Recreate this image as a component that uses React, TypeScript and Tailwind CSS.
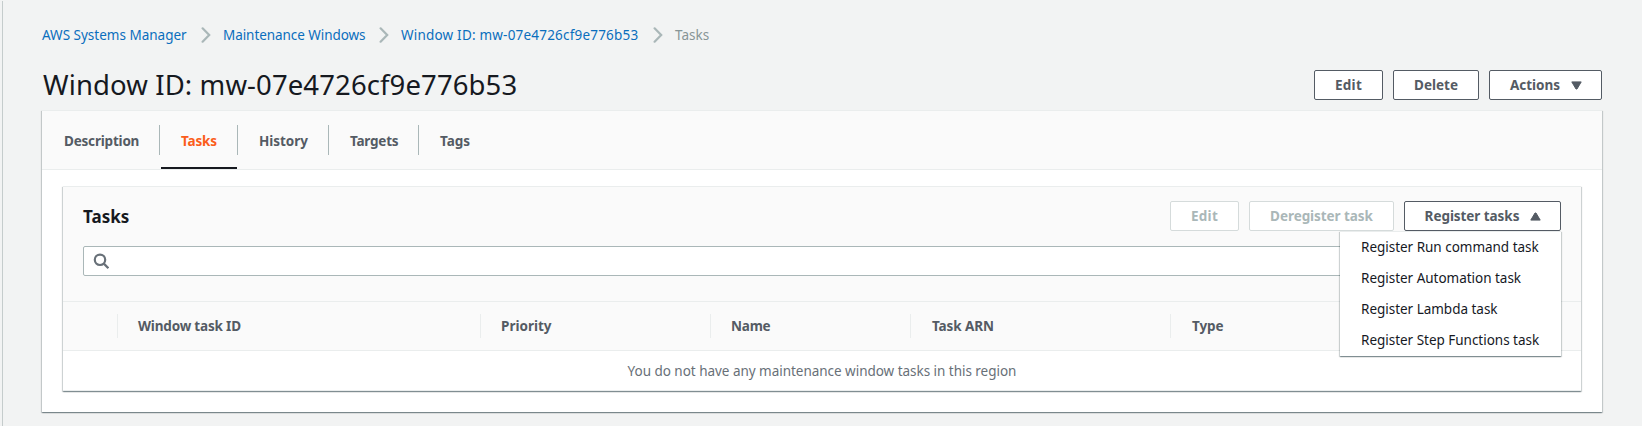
import React, { useState } from 'react';
import clsx from 'clsx';

const crumbs = [
  { label: 'AWS Systems Manager', cls: 'w-[144px]' },
  { label: 'Maintenance Windows', cls: 'w-[143px] tracking-[-0.06px]' },
  { label: 'Window ID: mw-07e4726cf9e776b53', cls: 'w-[237px] tracking-[0.2px]' },
];

const tabs = [
  { label: 'Description', cls: 'w-[118px] pl-[22px] tracking-[-0.2px]' },
  { label: 'Tasks', cls: 'w-[78px] pl-[21px] tracking-[-0.16px]' },
  { label: 'History', cls: 'w-[91px] pl-[21px] tracking-[-0.05px]' },
  { label: 'Targets', cls: 'w-[90px] pl-[21px] tracking-[-0.22px]' },
  { label: 'Tags', cls: 'w-[80px] pl-[21px]' },
];

const columns = [
  { label: '', cls: 'w-[55px]' },
  { label: 'Window task ID', cls: 'w-[363px] tracking-[-0.18px]' },
  { label: 'Priority', cls: 'w-[230px]' },
  { label: 'Name', cls: 'w-[200px] tracking-[-0.2px]' },
  { label: 'Task ARN', cls: 'w-[260px] !pl-[21px] tracking-[-0.1px]' },
  { label: 'Type', cls: 'flex-1 !pl-[21px] tracking-[-0.1px]' },
];

const menuItems = [
  'Register Run command task',
  'Register Automation task',
  'Register Lambda task',
  'Register Step Functions task',
];

const cardShadow =
  'border-t border-[#eaeded] shadow-[0_1px_1px_0_rgba(0,28,36,0.3),1px_1px_1px_0_rgba(0,28,36,0.15),-1px_1px_1px_0_rgba(0,28,36,0.15)]';

function Chevron() {
  return (
    <svg className="h-4 w-[10px] shrink-0" viewBox="0 0 10 16" fill="none" stroke="#aab7b8" strokeWidth="2.2" strokeLinecap="round">
      <path d="M1.6 1.3 8.2 8l-6.6 6.7" />
    </svg>
  );
}

function Triangle({ up = false }: { up?: boolean }) {
  return (
    <svg className={clsx('h-[9px] w-[11px] shrink-0', up && 'rotate-180')} viewBox="0 0 11 9" fill="#545b64" stroke="#545b64" strokeWidth="1" strokeLinejoin="round">
      <path d="M.8.9h9.4L6 8H5z" />
    </svg>
  );
}

function Button({ children, className, disabled }: { children: React.ReactNode; className?: string; disabled?: boolean }) {
  return (
    <button
      disabled={disabled}
      className={clsx(
        'flex h-[30px] items-center justify-center whitespace-nowrap rounded-[2px] border bg-white font-bold',
        disabled ? 'border-[#d5dbdb] text-[#aab7b8]' : 'border-[#545b64] text-[#545b64]',
        className,
      )}
    >
      {children}
    </button>
  );
}

export default function App() {
  const [active, setActive] = useState('Tasks');
  return (
    <div className="flex h-[426px] w-[1642px] overflow-hidden bg-[#f2f3f3] font-['Noto_Sans',sans-serif] text-[13.5px] leading-[20px] text-[#16191f]">
      <div className="mt-px w-[3px] border-r border-[#c5cccc]" />
      <main className="ml-[39px] w-[1560px]">
        <nav className="mt-[25px] flex h-5 items-center whitespace-nowrap text-[#0a6ebd]">
          {crumbs.map((c, i) => (
            <React.Fragment key={c.label}>
              <a className={c.cls}>{c.label}</a>
              <span className={clsx('mr-[12px] flex', i === 1 ? 'ml-[13px]' : 'ml-[15px]')}>
                <Chevron />
              </span>
            </React.Fragment>
          ))}
          <span className="text-[#879596]">Tasks</span>
        </nav>

        <header className="mt-[25px] flex h-[30px] items-center justify-between">
          <h1 className="whitespace-nowrap pl-px text-[27.5px] leading-[36px] tracking-[0.11px]">
            Window ID: mw-07e4726cf9e776b53
          </h1>
          <div className="flex gap-[10px]">
            <Button className="w-[69px] tracking-[0.25px]">Edit</Button>
            <Button className="w-[86px]">Delete</Button>
            <Button className="w-[113px] gap-[11px] pl-px">
              Actions <Triangle />
            </Button>
          </div>
        </header>

        <section className={clsx('mt-[10px] h-[302px] bg-white', cardShadow)}>
          <div className="flex h-[59px] items-center border-b border-[#eaeded] bg-[#fafafa]">
            {tabs.map((t, i) => (
              <button
                key={t.label}
                onClick={() => setActive(t.label)}
                className={clsx(
                  'relative flex h-[58px] items-center whitespace-nowrap pt-[2px] font-bold',
                  t.cls,
                  active === t.label ? 'text-[#fa5d1b]' : 'text-[#545b64]',
                )}
              >
                {t.label}
                {i < tabs.length - 1 && <span className="absolute right-0 top-[14px] h-[30px] w-px bg-[#aab7b8]" />}
                {active === t.label && <span className="absolute bottom-0 left-px right-px h-[2px] bg-[#16191f]" />}
              </button>
            ))}
          </div>

          <div className="px-[21px] pt-[16px]">
            <div className={clsx('h-[205px] bg-white', cardShadow)}>
              <div className="h-[115px] border-b border-[#eaeded] bg-[#fafafa] px-5 pt-[14px]">
                <div className="flex h-[30px] items-center justify-between">
                  <h2 className="pt-[2px] text-[17px] font-bold">Tasks</h2>
                  <div className="flex gap-[10px]">
                    <Button disabled className="w-[69px] tracking-[0.25px]">Edit</Button>
                    <Button disabled className="w-[145px] tracking-[-0.06px]">Deregister task</Button>
                    <div className="relative">
                      <Button className="w-[157px] gap-[11px] pl-px tracking-[-0.06px]">
                        Register tasks <Triangle up />
                      </Button>
                      <ul className={clsx('absolute right-0 top-[30px] z-10 w-[221px] bg-white', cardShadow)}>
                        {menuItems.map((m) => (
                          <li key={m} className="flex h-[31px] items-center whitespace-nowrap pb-[2px] pl-[21px] tracking-[-0.02px]">
                            {m}
                          </li>
                        ))}
                      </ul>
                    </div>
                  </div>
                </div>
                <div className="mt-[15px] flex h-[30px] items-center rounded-[2px] border border-[#aab7b8] bg-white pl-[9px]">
                  <svg className="size-4" viewBox="0 0 16 16" fill="none" stroke="#687078" strokeWidth="2.2">
                    <circle cx="7" cy="6.8" r="5.2" />
                    <path d="m10.8 10.6 4.6 4.6" />
                  </svg>
                </div>
              </div>

              <div className="flex h-[49px] items-center border-b border-[#eaeded] bg-[#fafafa]">
                {columns.map((c, i) => (
                  <div
                    key={i}
                    className={clsx(
                      'flex h-6 items-center whitespace-nowrap pl-[20px] font-bold text-[#545b64]',
                      c.cls,
                      i < columns.length - 1 && 'border-r border-[#eaeded]',
                    )}
                  >
                    {c.label}
                  </div>
                ))}
              </div>

              <div className="flex h-[40px] items-center justify-center border-b border-[#eaeded] tracking-[-0.03px] text-[#687078]">
                You do not have any maintenance window tasks in this region
              </div>
            </div>
          </div>
        </section>
      </main>
    </div>
  );
}
